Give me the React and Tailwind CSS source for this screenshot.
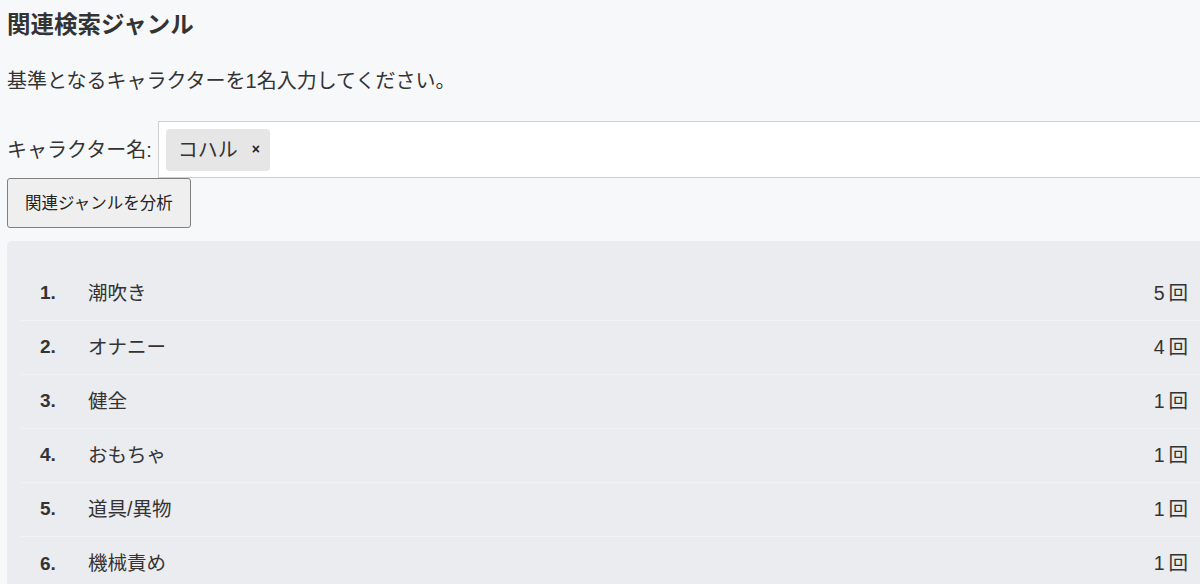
import React from "react";

const genres = [
  { name: "潮吹き", count: 5 },
  { name: "オナニー", count: 4 },
  { name: "健全", count: 1 },
  { name: "おもちゃ", count: 1 },
  { name: "道具/異物", count: 1 },
  { name: "機械責め", count: 1 },
];

const font = "font-['Liberation_Sans','Noto_Sans_CJK_JP',sans-serif]";

export default function App() {
  return (
    <div className={`min-h-[584px] bg-[#f7f8fa] text-[#333] ${font} pl-[7px] overflow-hidden`}>
      <h2 className="pt-[8px] text-[23.5px] leading-[34px] font-bold">関連検索ジャンル</h2>

      <p className="mt-[24px] text-[20px] leading-[30px]">基準となるキャラクターを1名入力してください。</p>

      <div className="mt-[25px] flex items-center gap-[6px]">
        <label className="text-[20px] leading-[30px] whitespace-nowrap">キャラクター名:</label>
        <div className="flex-1 h-[57px] bg-white border border-[#cfcfcf] border-r-0 flex items-center pl-[7px]">
          <span className="h-[42px] w-[104px] bg-[#e6e6e6] rounded-[4px] flex items-center pl-[12px] text-[20px]">
            コハル
            <span className="ml-[14px] text-[14px] font-bold text-[#222]">×</span>
          </span>
        </div>
      </div>

      <button className="h-[50px] px-[17px] bg-[#efefef] border border-[#808080] rounded-[3px] text-[16.5px] text-[#222]">
        関連ジャンルを分析
      </button>

      <div className="mt-[13px] bg-[#ebecf0] rounded-tl-[5px] pt-[26px] px-[13px] pr-0">
        <ul>
          {genres.map((g, i) => (
            <li
              key={g.name}
              className={`h-[54px] flex items-center pl-[20px] pr-[12px] ${
                i < genres.length - 1 ? "border-b border-[#f1f2f5]" : ""
              }`}
            >
              <span className="w-[48px] text-[19px] font-bold text-[#333]">{i + 1}.</span>
              <span className="flex-1 text-[19.5px]">{g.name}</span>
              <span className="text-[19.5px]">
                {g.count}
                <span className="ml-[4px]">回</span>
              </span>
            </li>
          ))}
        </ul>
      </div>
    </div>
  );
}
